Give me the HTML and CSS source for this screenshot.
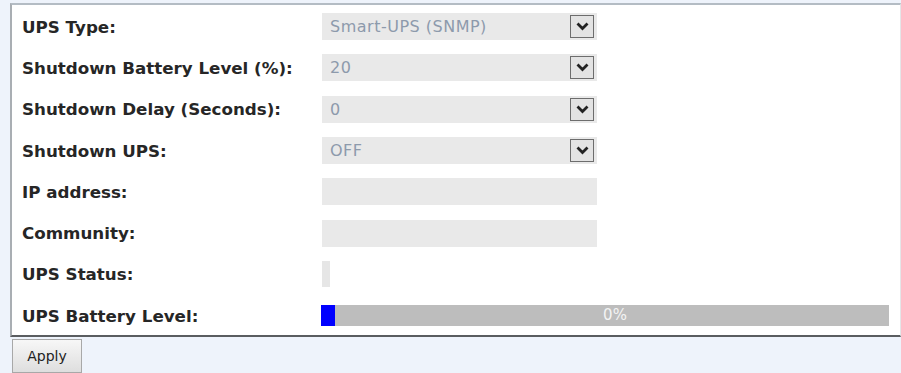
FILE: index.html
```html
<!DOCTYPE html>
<html>
<head>
    <title>UPS Settings</title>
    <link rel="stylesheet" href="styles.css">
</head>
<body>
    <div class="panel">
        <div class="form-grid">
            <div class="label">UPS Type:</div>
            <div class="field">
                <div class="select-box">
                    <span>Smart-UPS (SNMP)</span>
                    <span class="arrow"><svg width="13" height="9" viewBox="0 0 13 9"><path d="M1.5 1.5 L6.5 6.5 L11.5 1.5" fill="none" stroke="#222" stroke-width="2.8"/></svg></span>
                </div>
            </div>

            <div class="label">Shutdown Battery Level (%):</div>
            <div class="field">
                <div class="select-box">
                    <span>20</span>
                    <span class="arrow"><svg width="13" height="9" viewBox="0 0 13 9"><path d="M1.5 1.5 L6.5 6.5 L11.5 1.5" fill="none" stroke="#222" stroke-width="2.8"/></svg></span>
                </div>
            </div>

            <div class="label">Shutdown Delay (Seconds):</div>
            <div class="field">
                <div class="select-box">
                    <span>0</span>
                    <span class="arrow"><svg width="13" height="9" viewBox="0 0 13 9"><path d="M1.5 1.5 L6.5 6.5 L11.5 1.5" fill="none" stroke="#222" stroke-width="2.8"/></svg></span>
                </div>
            </div>

            <div class="label">Shutdown UPS:</div>
            <div class="field">
                <div class="select-box">
                    <span>OFF</span>
                    <span class="arrow"><svg width="13" height="9" viewBox="0 0 13 9"><path d="M1.5 1.5 L6.5 6.5 L11.5 1.5" fill="none" stroke="#222" stroke-width="2.8"/></svg></span>
                </div>
            </div>

            <div class="label">IP address:</div>
            <div class="field">
                <input type="text" class="text-box">
            </div>

            <div class="label">Community:</div>
            <div class="field">
                <input type="text" class="text-box">
            </div>

            <div class="label">UPS Status:</div>
            <div class="field">
                <div class="status-box"></div>
            </div>

            <div class="label">UPS Battery Level:</div>
            <div class="field">
                <div class="battery-bar">
                    <div class="battery-fill"></div>
                    <span class="battery-text">0%</span>
                </div>
            </div>
        </div>
    </div>

    <div class="footer">
        <button class="apply-btn">Apply</button>
    </div>
</body>
</html>
```

FILE: styles.css
```css
body {
    margin: 0;
    background-color: #eef3fb;
    font-family: "DejaVu Sans", Verdana, sans-serif;
}
.panel {
    margin: 3px 0 0 10px;
    height: 330px;
    background-color: #fff;
    border-top: 2px solid #b4bcc4;
    border-left: 2px solid #a9aeb3;
    border-bottom: 2px solid #5a5d60;
    border-right: 1px solid #e4e6e8;
}
.form-grid {
    display: grid;
    grid-template-columns: 310px 1fr;
    grid-auto-rows: 41.3px;
    align-items: center;
    padding-top: 1px;
}
.label {
    padding-left: 10px;
    font-size: 16.7px;
    font-weight: bold;
    color: #262626;
}
.select-box {
    display: flex;
    justify-content: space-between;
    align-items: center;
    width: 275px;
    height: 27px;
    box-sizing: border-box;
    padding: 0 3px 0 8px;
    background-color: #e9e9e9;
    color: #8d9aac;
    font-size: 16px;
    letter-spacing: 0.5px;
}
.arrow {
    display: flex;
    align-items: center;
    justify-content: center;
    width: 22px;
    height: 21px;
    border: 1px solid #6d6d6d;
    background-color: #e3e3e3;
}
.text-box {
    display: block;
    width: 275px;
    height: 27px;
    box-sizing: border-box;
    border: none;
    background-color: #e9e9e9;
}
.status-box {
    width: 8px;
    height: 26px;
    background-color: #e6e6e6;
}
.battery-bar {
    position: relative;
    width: 568px;
    height: 21px;
    margin-left: -1px;
    background-color: #bdbdbd;
}
.battery-fill {
    width: 14px;
    height: 100%;
    background-color: #0000ff;
}
.battery-text {
    position: absolute;
    left: 0;
    right: 0;
    top: 1px;
    text-align: center;
    color: #f4f4f4;
    font-size: 15px;
    padding-left: 20px;
}
.footer {
    padding: 2px 0 0 12px;
}
.apply-btn {
    width: 70px;
    height: 34px;
    border: 1px solid #a8a8a8;
    border-radius: 0;
    background: linear-gradient(#f7f7f7, #dedede);
    font-family: "DejaVu Sans", Tahoma, sans-serif;
    font-size: 14px;
    color: #222;
}
```
